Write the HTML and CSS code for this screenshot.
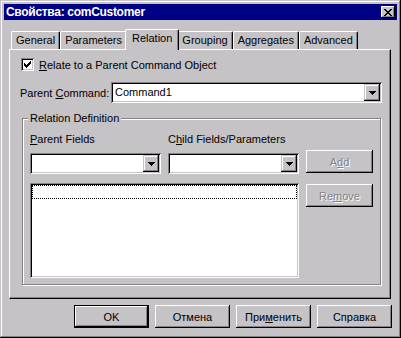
FILE: index.html
```html
<!DOCTYPE html>
<html lang="ru">
<head>
    <meta charset="UTF-8">
    <title>Свойства: comCustomer</title>
    <link rel="stylesheet" href="styles.css">
</head>
<body>
    <div class="window">
        <div class="titlebar">
            <span class="title">Свойства: comCustomer</span>
            <span class="close-btn">
                <svg width="8" height="7" viewBox="0 0 8 7" shape-rendering="crispEdges">
                    <path d="M0 0h2v1H0zM6 0h2v1H6zM1 1h2v1H1zM5 1h2v1H5zM2 2h4v1H2zM3 3h2v1H3zM2 4h4v1H2zM1 5h2v1H1zM5 5h2v1H5zM0 6h2v1H0zM6 6h2v1H6z" fill="#000"/>
                </svg>
            </span>
        </div>

        <div class="dialog-body">
            <div class="tabs">
                <div class="tab">General</div>
                <div class="tab">Parameters</div>
                <div class="tab active">Relation</div>
                <div class="tab">Grouping</div>
                <div class="tab">Aggregates</div>
                <div class="tab">Advanced</div>
            </div>

            <div class="panel">
                <div class="check-row">
                    <span class="checkbox">
                        <svg width="7" height="7" viewBox="0 0 7 7" shape-rendering="crispEdges">
                            <path d="M6 0h1v1H6zM5 1h2v1H5zM0 2h1v1H0zM4 2h3v1H4zM0 3h2v1H0zM3 3h3v1H3zM0 4h5v1H0zM1 5h3v1H1zM2 6h1v1H2z" fill="#000"/>
                        </svg>
                    </span>
                    <span class="check-label"><u>R</u>elate to a Parent Command Object</span>
                </div>

                <div class="field-row">
                    <span class="field-label">Parent <u>C</u>ommand:</span>
                    <div class="combo combo-wide">
                        <span class="combo-text">Command1</span>
                        <span class="combo-btn">
                            <svg width="7" height="4" viewBox="0 0 7 4" shape-rendering="crispEdges">
                                <path d="M0 0h7v1H0zM1 1h5v1H1zM2 2h3v1H2zM3 3h1v1H3z" fill="#000"/>
                            </svg>
                        </span>
                    </div>
                </div>

                <div class="group">
                    <span class="group-title">Relation Definition</span>
                    <div class="group-grid">
                        <span class="grid-label"><u>P</u>arent Fields</span>
                        <span class="grid-label">C<u>h</u>ild Fields/Parameters</span>
                        <span></span>

                        <div class="combo">
                            <span class="combo-text"></span>
                            <span class="combo-btn">
                                <svg width="7" height="4" viewBox="0 0 7 4" shape-rendering="crispEdges">
                                    <path d="M0 0h7v1H0zM1 1h5v1H1zM2 2h3v1H2zM3 3h1v1H3z" fill="#000"/>
                                </svg>
                            </span>
                        </div>
                        <div class="combo">
                            <span class="combo-text"></span>
                            <span class="combo-btn">
                                <svg width="7" height="4" viewBox="0 0 7 4" shape-rendering="crispEdges">
                                    <path d="M0 0h7v1H0zM1 1h5v1H1zM2 2h3v1H2zM3 3h1v1H3z" fill="#000"/>
                                </svg>
                            </span>
                        </div>
                        <div class="btn btn-disabled btn-add">A<u>d</u>d</div>

                        <div class="list">
                            <div class="list-focus"></div>
                        </div>
                        <div class="btn btn-disabled btn-remove">Re<u>m</u>ove</div>
                    </div>
                </div>
            </div>

            <div class="buttons">
                <div class="btn btn-default">OK</div>
                <div class="btn">Отмена</div>
                <div class="btn">При<u>м</u>енить</div>
                <div class="btn">Справка</div>
            </div>
        </div>
    </div>
</body>
</html>
```

FILE: styles.css
```css
body {
    margin: 0;
    font-family: "Liberation Sans", Arial, sans-serif;
    font-size: 11px;
    color: #000;
}
.window {
    width: 401px;
    height: 338px;
    box-sizing: border-box;
    padding: 4px;
    background: #c6c3c6;
    box-shadow: inset -1px -1px #000, inset 1px 1px #c6c3c6, inset -2px -2px #848284, inset 2px 2px #fff;
}
.titlebar {
    height: 16px;
    background: #000084;
    display: flex;
    align-items: center;
    justify-content: space-between;
    padding: 0 2px 0 2px;
}
.title {
    color: #fff;
    font-weight: 700;
    font-size: 12px;
    letter-spacing: -0.3px;
}
.close-btn {
    width: 14px;
    height: 12px;
    box-sizing: border-box;
    background: #c6c3c6;
    box-shadow: inset -1px -1px #000, inset 1px 1px #fff, inset -2px -2px #848284;
    display: flex;
    align-items: center;
    justify-content: center;
    padding-right: 1px;
}
.dialog-body {
    padding: 9px 6px 0 5px;
}
.tabs {
    display: flex;
    align-items: flex-end;
    height: 20px;
    padding-left: 2px;
}
.tab {
    height: 18px;
    box-sizing: border-box;
    padding: 0 4px;
    border: 1px solid #fff;
    border-right-color: #000;
    border-bottom: none;
    border-radius: 2px 2px 0 0;
    box-shadow: inset -1px 0 #848284;
    line-height: 16px;
    background: #c6c3c6;
}
.tab.active {
    height: 21px;
    margin: 0 -2px -1px;
    padding: 0 6px;
    position: relative;
    z-index: 1;
    line-height: 17px;
}
.panel {
    height: 250px;
    box-sizing: border-box;
    border: 1px solid;
    border-color: #fff #000 #000 #fff;
    box-shadow: inset -1px -1px #848284;
    padding: 8px 8px 0 11px;
}
.check-row {
    display: flex;
    align-items: center;
    height: 13px;
}
.checkbox {
    width: 13px;
    height: 13px;
    box-sizing: border-box;
    background: #fff;
    box-shadow: inset 1px 1px #848284, inset -1px -1px #fff, inset 2px 2px #000, inset -2px -2px #c6c3c6;
    display: flex;
    align-items: center;
    justify-content: center;
}
.check-label {
    margin-left: 5px;
}
.field-row {
    display: flex;
    align-items: center;
    margin-top: 11px;
}
.field-label {
    margin-left: -1px;
}
.combo {
    display: flex;
    height: 21px;
    box-sizing: border-box;
    padding: 2px;
    background: #fff;
    box-shadow: inset 1px 1px #848284, inset -1px -1px #fff, inset 2px 2px #000, inset -2px -2px #c6c3c6;
}
.combo-wide {
    width: 271px;
    margin-left: auto;
}
.combo-text {
    flex: 1;
    padding-left: 2px;
    line-height: 17px;
}
.combo-btn {
    width: 16px;
    height: 17px;
    box-sizing: border-box;
    background: #c6c3c6;
    box-shadow: inset -1px -1px #000, inset 1px 1px #c6c3c6, inset -2px -2px #848284, inset 2px 2px #fff;
    display: flex;
    align-items: center;
    justify-content: center;
}
.group {
    position: relative;
    margin: 15px 1px 0 1px;
    border: 1px solid #848284;
    box-shadow: inset 1px 1px #fff, 1px 1px #fff;
    padding: 14px 7px 6px 7px;
}
.group-title {
    position: absolute;
    top: -7px;
    left: 5px;
    padding: 0 2px;
    background: #c6c3c6;
    line-height: 13px;
}
.group-grid {
    display: grid;
    grid-template-columns: 131px 131px 67px;
    column-gap: 7px;
}
.grid-label {
    line-height: 13px;
    padding-bottom: 7px;
    white-space: nowrap;
}
.btn {
    box-sizing: border-box;
    width: 75px;
    height: 23px;
    background: #c6c3c6;
    box-shadow: inset -1px -1px #000, inset 1px 1px #fff, inset -2px -2px #848284;
    display: flex;
    align-items: center;
    justify-content: center;
}
.btn-default {
    border: 1px solid #000;
}
.btn-disabled {
    color: #848284;
    text-shadow: 1px 1px #fff;
}
.btn-add {
    width: 67px;
    align-self: start;
    margin-top: -3px;
}
.btn-remove {
    width: 67px;
    align-self: start;
    margin-top: 10px;
}
.list {
    grid-column: 1 / 3;
    height: 95px;
    margin-top: 9px;
    box-sizing: border-box;
    padding: 2px;
    background: #fff;
    box-shadow: inset 1px 1px #848284, inset -1px -1px #fff, inset 2px 2px #000, inset -2px -2px #c6c3c6;
}
.list-focus {
    height: 14px;
    box-sizing: border-box;
    border: 1px dotted #000;
}
.buttons {
    display: flex;
    justify-content: flex-end;
    gap: 6px;
    margin-top: 6px;
    margin-right: -1px;
}
```
